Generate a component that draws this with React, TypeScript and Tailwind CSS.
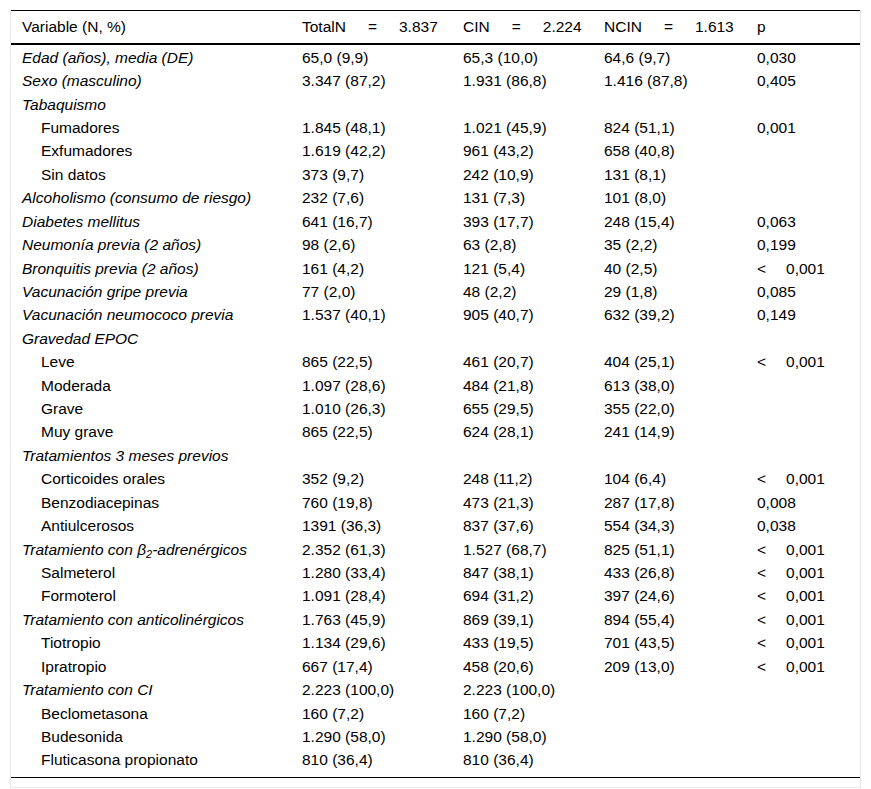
import React from "react";

type Row = {
  label: React.ReactNode;
  italic?: boolean;
  indent?: boolean;
  t?: string;
  c?: string;
  n?: string;
  p?: string;
  lt?: boolean;
};

const rows: Row[] = [
  { label: "Edad (años), media (DE)", italic: true, t: "65,0 (9,9)", c: "65,3 (10,0)", n: "64,6 (9,7)", p: "0,030" },
  { label: "Sexo (masculino)", italic: true, t: "3.347 (87,2)", c: "1.931 (86,8)", n: "1.416 (87,8)", p: "0,405" },
  { label: "Tabaquismo", italic: true },
  { label: "Fumadores", indent: true, t: "1.845 (48,1)", c: "1.021 (45,9)", n: "824 (51,1)", p: "0,001" },
  { label: "Exfumadores", indent: true, t: "1.619 (42,2)", c: "961 (43,2)", n: "658 (40,8)" },
  { label: "Sin datos", indent: true, t: "373 (9,7)", c: "242 (10,9)", n: "131 (8,1)" },
  { label: "Alcoholismo (consumo de riesgo)", italic: true, t: "232 (7,6)", c: "131 (7,3)", n: "101 (8,0)" },
  { label: "Diabetes mellitus", italic: true, t: "641 (16,7)", c: "393 (17,7)", n: "248 (15,4)", p: "0,063" },
  { label: "Neumonía previa (2 años)", italic: true, t: "98 (2,6)", c: "63 (2,8)", n: "35 (2,2)", p: "0,199" },
  { label: "Bronquitis previa (2 años)", italic: true, t: "161 (4,2)", c: "121 (5,4)", n: "40 (2,5)", p: "0,001", lt: true },
  { label: "Vacunación gripe previa", italic: true, t: "77 (2,0)", c: "48 (2,2)", n: "29 (1,8)", p: "0,085" },
  { label: "Vacunación neumococo previa", italic: true, t: "1.537 (40,1)", c: "905 (40,7)", n: "632 (39,2)", p: "0,149" },
  { label: "Gravedad EPOC", italic: true },
  { label: "Leve", indent: true, t: "865 (22,5)", c: "461 (20,7)", n: "404 (25,1)", p: "0,001", lt: true },
  { label: "Moderada", indent: true, t: "1.097 (28,6)", c: "484 (21,8)", n: "613 (38,0)" },
  { label: "Grave", indent: true, t: "1.010 (26,3)", c: "655 (29,5)", n: "355 (22,0)" },
  { label: "Muy grave", indent: true, t: "865 (22,5)", c: "624 (28,1)", n: "241 (14,9)" },
  { label: "Tratamientos 3 meses previos", italic: true },
  { label: "Corticoides orales", indent: true, t: "352 (9,2)", c: "248 (11,2)", n: "104 (6,4)", p: "0,001", lt: true },
  { label: "Benzodiacepinas", indent: true, t: "760 (19,8)", c: "473 (21,3)", n: "287 (17,8)", p: "0,008" },
  { label: "Antiulcerosos", indent: true, t: "1391 (36,3)", c: "837 (37,6)", n: "554 (34,3)", p: "0,038" },
  {
    label: (
      <>
        Tratamiento con β<sub className="text-[11px] leading-none relative top-[3px] align-baseline">2</sub>-adrenérgicos
      </>
    ),
    italic: true,
    t: "2.352 (61,3)",
    c: "1.527 (68,7)",
    n: "825 (51,1)",
    p: "0,001",
    lt: true,
  },
  { label: "Salmeterol", indent: true, t: "1.280 (33,4)", c: "847 (38,1)", n: "433 (26,8)", p: "0,001", lt: true },
  { label: "Formoterol", indent: true, t: "1.091 (28,4)", c: "694 (31,2)", n: "397 (24,6)", p: "0,001", lt: true },
  { label: "Tratamiento con anticolinérgicos", italic: true, t: "1.763 (45,9)", c: "869 (39,1)", n: "894 (55,4)", p: "0,001", lt: true },
  { label: "Tiotropio", indent: true, t: "1.134 (29,6)", c: "433 (19,5)", n: "701 (43,5)", p: "0,001", lt: true },
  { label: "Ipratropio", indent: true, t: "667 (17,4)", c: "458 (20,6)", n: "209 (13,0)", p: "0,001", lt: true },
  { label: "Tratamiento con CI", italic: true, t: "2.223 (100,0)", c: "2.223 (100,0)" },
  { label: "Beclometasona", indent: true, t: "160 (7,2)", c: "160 (7,2)" },
  { label: "Budesonida", indent: true, t: "1.290 (58,0)", c: "1.290 (58,0)" },
  { label: "Fluticasona propionato", indent: true, t: "810 (36,4)", c: "810 (36,4)" },
];

const grid = "grid grid-cols-[280px_161px_141px_153px_1fr]";

function Eq({ name, value }: { name: string; value: string }) {
  return (
    <span className="whitespace-nowrap">
      {name}
      <span className="ml-[22px]">=</span>
      <span className="ml-[22px]">{value}</span>
    </span>
  );
}

export default function App() {
  return (
    <div className="bg-white min-h-[789px] pt-[10px] pl-[10px]" style={{ fontFamily: '"Liberation Sans", Arial, sans-serif' }}>
      <div className="w-[851px] border-x border-b border-[#e8e8e8] pb-[9px] text-[15.5px] text-black">
        <div className="border-t border-black border-b-2">
          <div className={`${grid} h-[32px] items-center`}>
            <div className="pl-[11px]">Variable (N, %)</div>
            <div className="pl-[11px]"><Eq name="TotalN" value="3.837" /></div>
            <div className="pl-[11px]"><Eq name="CIN" value="2.224" /></div>
            <div className="pl-[11px]"><Eq name="NCIN" value="1.613" /></div>
            <div className="pl-[11px]">p</div>
          </div>
        </div>
        <div className="border-b border-black pt-[1px] pb-[5px]">
          {rows.map((r, i) => (
            <div key={i} className={`${grid} h-[23.43px] items-center leading-[18px]`}>
              <div className={`${r.indent ? "pl-[30px]" : "pl-[11px]"} ${r.italic ? "italic" : ""} whitespace-nowrap`}>{r.label}</div>
              <div className="pl-[11px] whitespace-nowrap">{r.t ?? ""}</div>
              <div className="pl-[11px] whitespace-nowrap">{r.c ?? ""}</div>
              <div className="pl-[11px] whitespace-nowrap">{r.n ?? ""}</div>
              <div className="pl-[11px] whitespace-nowrap">
                {r.p ? (
                  r.lt ? (
                    <>
                      <span>&lt;</span>
                      <span className="ml-[20px]">{r.p}</span>
                    </>
                  ) : (
                    r.p
                  )
                ) : (
                  ""
                )}
              </div>
            </div>
          ))}
        </div>
      </div>
    </div>
  );
}
